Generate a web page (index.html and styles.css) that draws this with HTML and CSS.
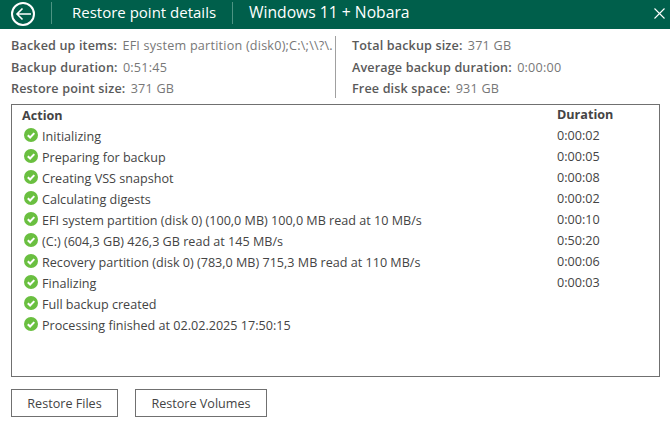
FILE: index.html
```html
<!DOCTYPE html>
<html lang="en">
<head>
<meta charset="utf-8">
<title>Restore point details</title>
<link rel="stylesheet" href="styles.css">
</head>
<body>
<header class="titlebar">
  <svg class="back" width="26" height="26" viewBox="0 0 26 26" fill="none" stroke="#fff"><circle cx="12" cy="13" r="11" stroke-width="2"/><path d="M20 13H6M11.500 7.500 6 13l5.500 5.500" stroke-width="1.600"/></svg>
  <span class="title title-first">Restore point details</span>
  <span class="title title-second">Windows 11 + Nobara</span>
  <svg class="close" width="11" height="11" viewBox="0 0 11 11" stroke="#fff" stroke-width="1.100" fill="none"><path d="M.5.500l10 10M10.500.500l-10 10"/></svg>
</header>
<section class="summary">
  <div class="summary-left">
    <div class="fact"><b>Backed up items:</b> <span>EFI system partition (disk0);C:\;\\?\.</span></div>
    <div class="fact"><b>Backup duration:</b> <span>0:51:45</span></div>
    <div class="fact"><b>Restore point size:</b> <span>371 GB</span></div>
  </div>
  <div class="summary-right">
    <div class="fact"><b>Total backup size:</b> <span>371 GB</span></div>
    <div class="fact"><b>Average backup duration:</b> <span>0:00:00</span></div>
    <div class="fact"><b>Free disk space:</b> <span>931 GB</span></div>
  </div>
</section>
<section class="log">
  <div class="row head"><span class="action">Action</span><span class="duration">Duration</span></div>
  <div class="row"><span class="action"><svg class="ok" viewBox="0 0 14 14"><circle cx="7" cy="7" r="7"/><path d="M3.800 7.200l2.300 2.300 4.200-4.400"/></svg>Initializing</span><span class="duration">0:00:02</span></div>
  <div class="row"><span class="action"><svg class="ok" viewBox="0 0 14 14"><circle cx="7" cy="7" r="7"/><path d="M3.800 7.200l2.300 2.300 4.200-4.400"/></svg>Preparing for backup</span><span class="duration">0:00:05</span></div>
  <div class="row"><span class="action"><svg class="ok" viewBox="0 0 14 14"><circle cx="7" cy="7" r="7"/><path d="M3.800 7.200l2.300 2.300 4.200-4.400"/></svg>Creating VSS snapshot</span><span class="duration">0:00:08</span></div>
  <div class="row"><span class="action"><svg class="ok" viewBox="0 0 14 14"><circle cx="7" cy="7" r="7"/><path d="M3.800 7.200l2.300 2.300 4.200-4.400"/></svg>Calculating digests</span><span class="duration">0:00:02</span></div>
  <div class="row"><span class="action"><svg class="ok" viewBox="0 0 14 14"><circle cx="7" cy="7" r="7"/><path d="M3.800 7.200l2.300 2.300 4.200-4.400"/></svg>EFI system partition (disk 0) (100,0 MB) 100,0 MB read at 10 MB/s</span><span class="duration">0:00:10</span></div>
  <div class="row"><span class="action"><svg class="ok" viewBox="0 0 14 14"><circle cx="7" cy="7" r="7"/><path d="M3.800 7.200l2.300 2.300 4.200-4.400"/></svg>(C:) (604,3 GB) 426,3 GB read at 145 MB/s</span><span class="duration">0:50:20</span></div>
  <div class="row"><span class="action"><svg class="ok" viewBox="0 0 14 14"><circle cx="7" cy="7" r="7"/><path d="M3.800 7.200l2.300 2.300 4.200-4.400"/></svg>Recovery partition (disk 0) (783,0 MB) 715,3 MB read at 110 MB/s</span><span class="duration">0:00:06</span></div>
  <div class="row"><span class="action"><svg class="ok" viewBox="0 0 14 14"><circle cx="7" cy="7" r="7"/><path d="M3.800 7.200l2.300 2.300 4.200-4.400"/></svg>Finalizing</span><span class="duration">0:00:03</span></div>
  <div class="row"><span class="action"><svg class="ok" viewBox="0 0 14 14"><circle cx="7" cy="7" r="7"/><path d="M3.800 7.200l2.300 2.300 4.200-4.400"/></svg>Full backup created</span></div>
  <div class="row"><span class="action"><svg class="ok" viewBox="0 0 14 14"><circle cx="7" cy="7" r="7"/><path d="M3.800 7.200l2.300 2.300 4.200-4.400"/></svg>Processing finished at 02.02.2025 17:50:15</span></div>
</section>
<footer class="actions">
  <button class="btn btn-files">Restore Files</button>
  <button class="btn btn-volumes">Restore Volumes</button>
</footer>
</body>
</html>
```
FILE: styles.css
```css
* { box-sizing: border-box; }
html, body { margin: 0; padding: 0; }
body {
  width: 670px;
  height: 433px;
  background: #fff;
  color: #444;
  font-family: "Open Sans", "Noto Sans", "Liberation Sans", sans-serif;
  font-size: 12.6px;
  overflow: hidden;
}
.titlebar {
  display: flex;
  align-items: center;
  height: 29px;
  background: #005f4b;
  color: #fff;
  padding-left: 11px;
}
.back { flex: none; margin-top: -1px; }
.title { line-height: 20px; margin-top: -3px; }
.title-first {
  font-size: 15px;
  margin-left: 14px;
  padding-left: 20px;
  border-left: 1px solid #4d9483;
  height: 22px;
  width: 181px;
  white-space: nowrap;
}
.title-second {
  font-size: 15.700px;
  padding-left: 16px;
  border-left: 1px solid #4d9483;
  height: 22px;
  white-space: nowrap;
}
.close { margin-left: auto; margin-right: 5px; margin-top: -3px; flex: none; }
.summary {
  display: flex;
  height: 75px;
  padding: 7px 11px 0;
}
.summary-left { width: 325px; border-right: 1px solid #a0a0a0; height: 62px; overflow: hidden; }
.summary-right { padding-left: 16px; }
.fact { height: 21.500px; line-height: 20px; white-space: nowrap; }
.fact b { font-weight: 600; color: #5a5a5a; letter-spacing: .14px; }
.fact span { color: #777; margin-left: 2px; letter-spacing: .22px; }
.log {
  margin: 0 10px 0 11px;
  height: 273px;
  border: 1px solid #707070;
  padding: 0 10px;
}
.row { display: flex; height: 21px; line-height: 20px; }
.action { flex: 0 0 535px; display: flex; align-items: center; white-space: nowrap; }
.head { font-weight: 700; }
.ok { width: 14px; height: 14px; margin-left: 2px; margin-right: 4px; margin-top: -3px; flex: none; }
.ok circle { fill: #6abf40; }
.ok path { fill: none; stroke: #fff; stroke-width: 2; }
.actions { display: flex; gap: 17px; padding: 12px 11px 0; }
.btn {
  height: 28px;
  border: 1px solid #707070;
  background: #fff;
  color: #444;
  font: inherit;
  padding: 0;
}
.btn-files { width: 107px; }
.btn-volumes { width: 132px; }
```
